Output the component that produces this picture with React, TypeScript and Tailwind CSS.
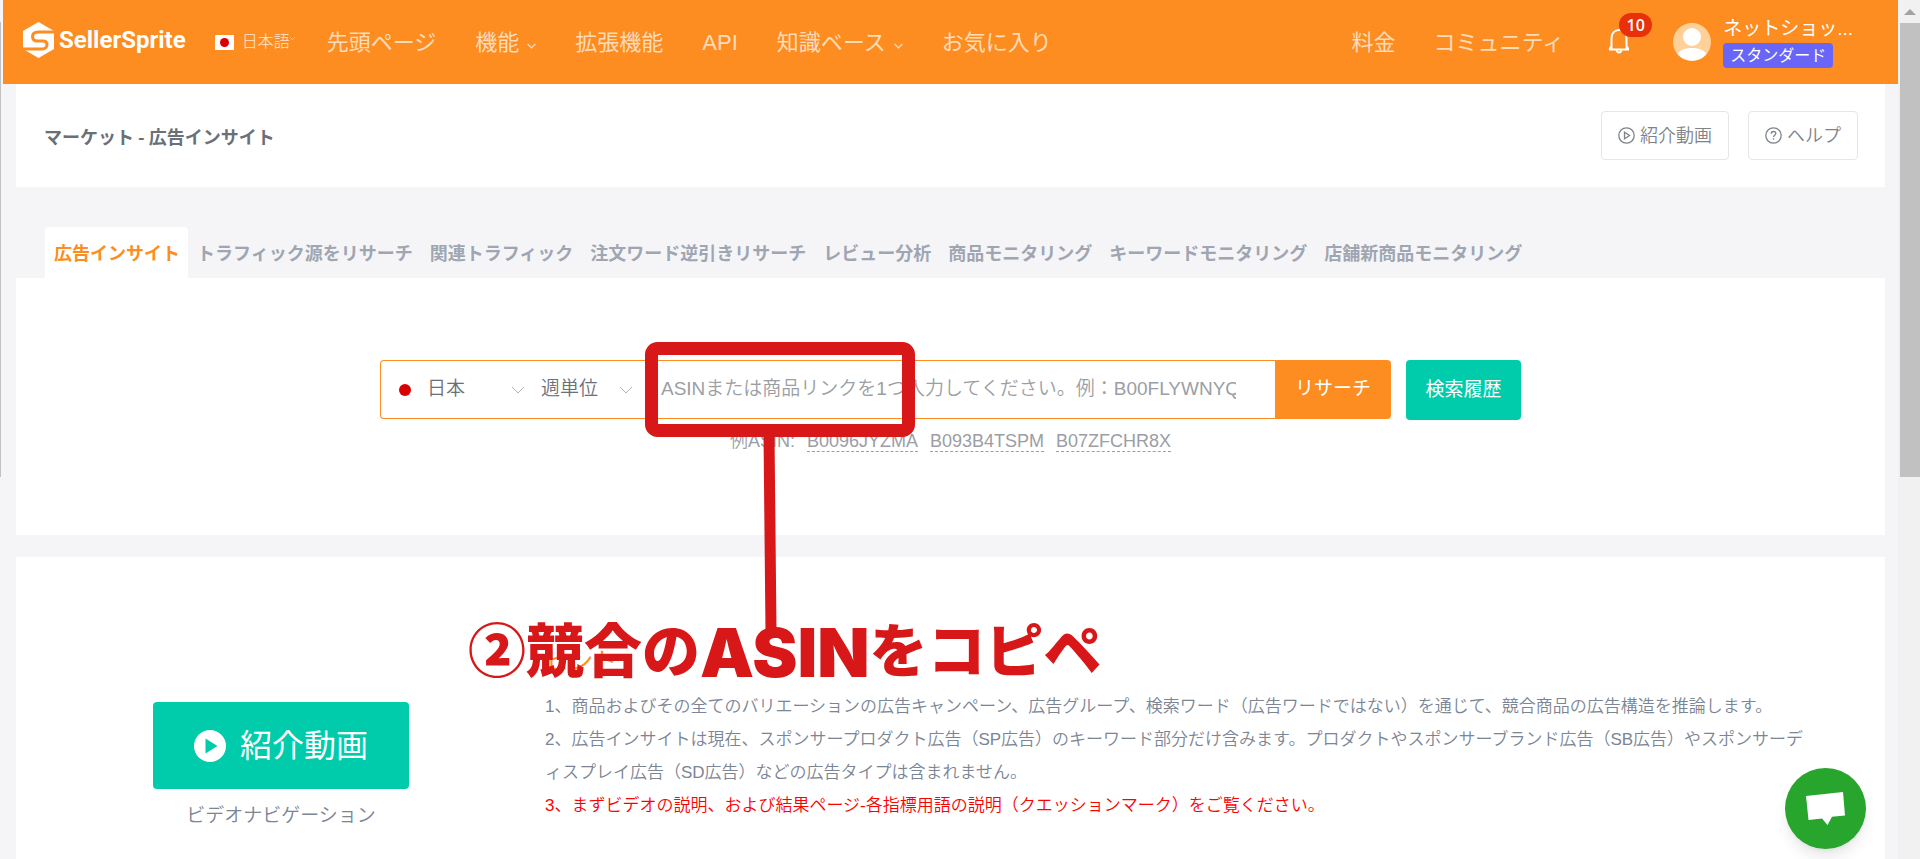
import { useState } from "react";

const navLinks = [
  { label: "先頭ページ", menu: false },
  { label: "機能", menu: true },
  { label: "拡張機能", menu: false },
  { label: "API", menu: false },
  { label: "知識ベース", menu: true },
  { label: "お気に入り", menu: false },
];

const tabs = [
  "広告インサイト",
  "トラフィック源をリサーチ",
  "関連トラフィック",
  "注文ワード逆引きリサーチ",
  "レビュー分析",
  "商品モニタリング",
  "キーワードモニタリング",
  "店舗新商品モニタリング",
];

const sampleAsins = ["B0096JYZMA", "B093B4TSPM", "B07ZFCHR8X"];

function Chevron({ className }: { className: string }) {
  return (
    <svg className={className} viewBox="0 0 14 8" fill="none" stroke="currentColor" aria-hidden="true">
      <path d="M1 1l6 6 6-6" />
    </svg>
  );
}

function Logo() {
  return (
    <a href="#" className="flex items-center gap-[5px] text-white">
      <svg className="h-9 w-[31px]" viewBox="0 0 31 36" fill="none" aria-hidden="true">
        <path fill="#fff" d="M15.500 0L31 9v18l-15.500 9L0 27V9z" />
        <path stroke="#fd8d20" strokeWidth="3" d="M32 10H15.500C11.500 10 9.500 11.500 9.500 14.500s2 4.500 5 4.500H20c2.500 0 4 1 4 3.500S22 27 19.500 27H-1" />
      </svg>
      <span className="font-[Roboto] text-2xl leading-8 font-bold">SellerSprite</span>
    </a>
  );
}

function Header() {
  return (
    <header className="flex h-[84px] shrink-0 items-center bg-[#fd8d20] pb-1 pl-5 pr-[45px] font-normal whitespace-nowrap">
      <Logo />
      <a href="#" className="ml-[29px] flex items-center pt-1 text-base font-light text-white/80">
        <span className="mr-2 flex h-[15px] w-[19px] items-center justify-center bg-white">
          <span className="h-[9px] w-[9px] rounded-full bg-[#d80000]" />
        </span>
        日本語
        <Chevron className="mb-2 h-[3px] w-[5px] shrink-0 stroke-2" />
      </a>
      <nav className="ml-8 flex items-center gap-[39px] pt-1 text-[22px] text-white/70">
        {navLinks.map((l) => (
          <a key={l.label} href="#" className="flex items-center gap-2">
            {l.label}
            {l.menu && <Chevron className="mt-2 h-[6px] w-[9px] stroke-2" />}
          </a>
        ))}
      </nav>
      <div className="ml-auto flex items-center">
        <nav className="flex gap-[38px] pt-1 text-[22px] text-white/70">
          <a href="#">料金</a>
          <a href="#">コミュニティ</a>
        </nav>
        <button aria-label="通知" className="relative ml-11 text-white">
          <svg className="h-[27px] w-[22px]" viewBox="0 0 22 27" fill="none" stroke="currentColor" strokeWidth="2" strokeLinejoin="round" aria-hidden="true">
            <path d="M3.500 22V11.500C3.500 6.500 6.500 3 11 3s7.500 3.500 7.500 8.500V22M1 22.500h20M8.500 23.500c.5 1.500 1.300 2 2.500 2s2-.5 2.500-2M1.500 22l2-3M20.500 22l-2-3" />
          </svg>
          <span className="absolute -top-[14px] left-[11px] flex h-6 w-[33px] items-center justify-center rounded-full bg-[#e8300a] font-[Open_Sans] text-base font-semibold">
            10
          </span>
        </button>
        <a href="#" className="ml-[43px] flex items-center gap-3 text-white">
          <svg className="mt-1 h-[38px] w-[38px]" viewBox="0 0 38 38" aria-hidden="true">
            <circle cx="19" cy="19" r="19" fill="#ffd199" />
            <circle cx="19" cy="14" r="9" fill="#fff" />
            <path fill="#fff" d="M4.500 31C7 27 12 25 19 25s12 2 14.500 6A19 19 0 0 1 4.500 31z" />
          </svg>
          <span className="flex flex-col items-start pt-[2px]">
            <span className="text-[19px] leading-7">ネットショッ...</span>
            <span className="rounded bg-[#6865f7] px-[7px] text-base leading-[25px]">スタンダード</span>
          </span>
        </a>
      </div>
    </header>
  );
}

function TitleBar() {
  return (
    <div className="flex h-[103px] items-center bg-white pl-7 pr-[27px] text-lg">
      <h1 className="font-['Noto_Sans_CJK_JP',sans-serif] font-bold text-[#6b7078]">マーケット - 広告インサイト</h1>
      <div className="ml-auto flex gap-[19px] text-[#7f8389]">
        <button className="flex h-[49px] items-center gap-[5px] rounded border border-[#e6e6e8] px-4">
          <svg className="h-[17px] w-[17px]" viewBox="0 0 17 17" fill="none" stroke="currentColor" strokeWidth="1.300" aria-hidden="true">
            <circle cx="8.500" cy="8.500" r="7.700" />
            <path d="M6.500 5.200v6.600l5-3.300z" />
          </svg>
          紹介動画
        </button>
        <button className="flex h-[49px] items-center gap-[5px] rounded border border-[#e6e6e8] px-4">
          <svg className="h-[17px] w-[17px]" viewBox="0 0 17 17" fill="none" stroke="currentColor" strokeWidth="1.300" aria-hidden="true">
            <circle cx="8.500" cy="8.500" r="7.700" />
            <path d="M6.200 6.800c0-1.400 1-2.300 2.300-2.300s2.300.9 2.300 2.100c0 1.600-2.300 1.700-2.300 3.400M8.500 11.300v1.400" />
          </svg>
          ヘルプ
        </button>
      </div>
    </div>
  );
}

function Callout() {
  return (
    <div className="pointer-events-none absolute -top-[18px] left-[88px] text-[#d71718]">
      <svg className="ml-[177px] h-[290px] w-[270px]" viewBox="0 0 270 290" fill="none" stroke="currentColor" aria-hidden="true">
        <rect x="6.500" y="6.500" width="257" height="82" rx="6" strokeWidth="13" />
        <path d="M124 92l2 198" strokeWidth="11" />
      </svg>
      <p className="-mt-[14px] flex items-center text-[58px] leading-[68px] font-black whitespace-nowrap">
        ②競合の<span className="font-[Inter] text-[68px]">ASIN</span>をコピペ
      </p>
    </div>
  );
}

function SearchPanel() {
  const [asin, setAsin] = useState("");
  return (
    <section className="flex h-[257px] justify-center bg-white pt-[82px]">
      <div className="relative">
        <form className="flex text-[19px] text-[#6b7078]" onSubmit={(e) => e.preventDefault()}>
          <div className="flex h-[59px] items-center rounded-l border border-r-0 border-[#fd8d20] pl-[18px]">
            <span className="h-3 w-3 rounded-full bg-[#d80000]" />
            <label className="ml-4 flex w-[98px] items-center">
              <select aria-label="国" className="w-full appearance-none bg-transparent outline-none">
                <option>日本</option>
              </select>
              <Chevron className="h-2 w-[14px] shrink-0 text-[#b0b6bf]" />
            </label>
            <label className="ml-4 flex w-[92px] items-center">
              <select aria-label="期間" className="w-full appearance-none bg-transparent outline-none">
                <option>週単位</option>
              </select>
              <Chevron className="h-2 w-[14px] shrink-0 text-[#b0b6bf]" />
            </label>
            <input
              aria-label="ASIN"
              value={asin}
              onChange={(e) => setAsin(e.target.value)}
              placeholder="ASINまたは商品リンクを1つ入力してください。例：B00FLYWNYQ"
              className="ml-7 mr-[39px] w-[575px] outline-none placeholder:text-[#9b9ea4]"
            />
          </div>
          <button className="h-[59px] w-[116px] rounded-r bg-[#fd8d20] font-normal text-white">リサーチ</button>
          <button type="button" className="ml-[15px] h-[60px] w-[115px] rounded bg-[#00cbaa] font-normal text-white">
            検索履歴
          </button>
        </form>
        <div className="mt-[11px] flex justify-center gap-3 text-lg leading-5 text-[#9b9ea4]">
          <span>例ASIN:</span>
          {sampleAsins.map((a) => (
            <a key={a} href="#" className="border-b border-dashed border-[#9b9ea4]" onClick={() => setAsin(a)}>
              {a}
            </a>
          ))}
        </div>
        <Callout />
      </div>
    </section>
  );
}

function GuidePanel() {
  return (
    <section className="mt-[22px] flex flex-1 bg-white pl-[137px] text-[#7b8594]">
      <div className="flex w-64 shrink-0 flex-col items-center pt-[145px]">
        <button className="flex h-[87px] w-full items-center justify-center gap-[14px] rounded bg-[#00cbaa] text-[32px] font-normal text-white">
          <svg className="h-8 w-8" viewBox="0 0 32 32" aria-hidden="true">
            <circle cx="16" cy="16" r="16" fill="#fff" />
            <path d="M11.500 8.500v15l12-7.500z" fill="#00cbaa" />
          </svg>
          紹介動画
        </button>
        <p className="mt-[13px] text-[19px]">ビデオナビゲーション</p>
      </div>
      <div className="ml-[136px] w-[1270px] pt-[86px] text-[17px] leading-[33px]">
        <h2 className="mb-[11px] text-2xl leading-9 font-normal text-[#fd8d20]">ヒント</h2>
        <p>
          1、商品およびその全てのバリエーションの広告キャンペーン、広告グループ、検索ワード（広告ワードではない）を通じて、競合商品の広告構造を推論します。
        </p>
        <p>
          2、広告インサイトは現在、スポンサープロダクト広告（SP広告）のキーワード部分だけ含みます。プロダクトやスポンサーブランド広告（SB広告）やスポンサーディスプレイ広告（SD広告）などの広告タイプは含まれません。
        </p>
        <p className="text-[#ff0000]">
          3、まずビデオの説明、および結果ページ-各指標用語の説明（クエッションマーク）をご覧ください。
        </p>
      </div>
    </section>
  );
}

export default function App() {
  return (
    <div className="flex h-screen overflow-hidden bg-[#f5f5f8] font-['Liberation_Sans','Noto_Sans_CJK_JP',sans-serif] font-[350]">
      <div className="w-[3px] shrink-0 pt-[22px]">
        <div className="h-[455px] w-px bg-[#c1c1c1]" />
      </div>

      <div className="flex min-w-0 flex-1 flex-col">
        <Header />
        <main className="flex flex-1 flex-col px-[13px]">
          <TitleBar />
          <nav className="mt-10 flex h-[51px] pl-[29px] text-lg font-bold whitespace-nowrap text-[#a0a6b1]">
            {tabs.map((t, i) => (
              <a
                key={t}
                href="#"
                className={`flex items-center pt-[2px] pr-2 pl-[9px] ${i === 0 ? "rounded-t bg-white text-[#fd8d20]" : ""}`}
              >
                {t}
              </a>
            ))}
          </nav>
          <SearchPanel />
          <GuidePanel />
        </main>
      </div>

      <div className="flex w-[22px] shrink-0 flex-col items-end bg-[#f1f1f1]">
        <div className="flex h-[23px] w-5 items-center justify-center">
          <svg className="h-[6px] w-3" viewBox="0 0 12 6" aria-hidden="true">
            <path d="M6 0l6 6H0z" fill="#a3a3a3" />
          </svg>
        </div>
        <div className="h-[454px] w-5 bg-[#c1c1c1]" />
      </div>

      <button
        aria-label="チャット"
        className="fixed right-[54px] bottom-[10px] flex h-[81px] w-[81px] items-center justify-center rounded-full bg-[#28a52c] shadow-lg"
      >
        <svg className="h-[33px] w-[39px]" viewBox="0 0 39 33" aria-hidden="true">
          <path d="M0 4l37-4 2 23.500-13 1.300L21.500 33 16 26.500 2.500 28z" fill="#fff" />
        </svg>
      </button>
    </div>
  );
}
